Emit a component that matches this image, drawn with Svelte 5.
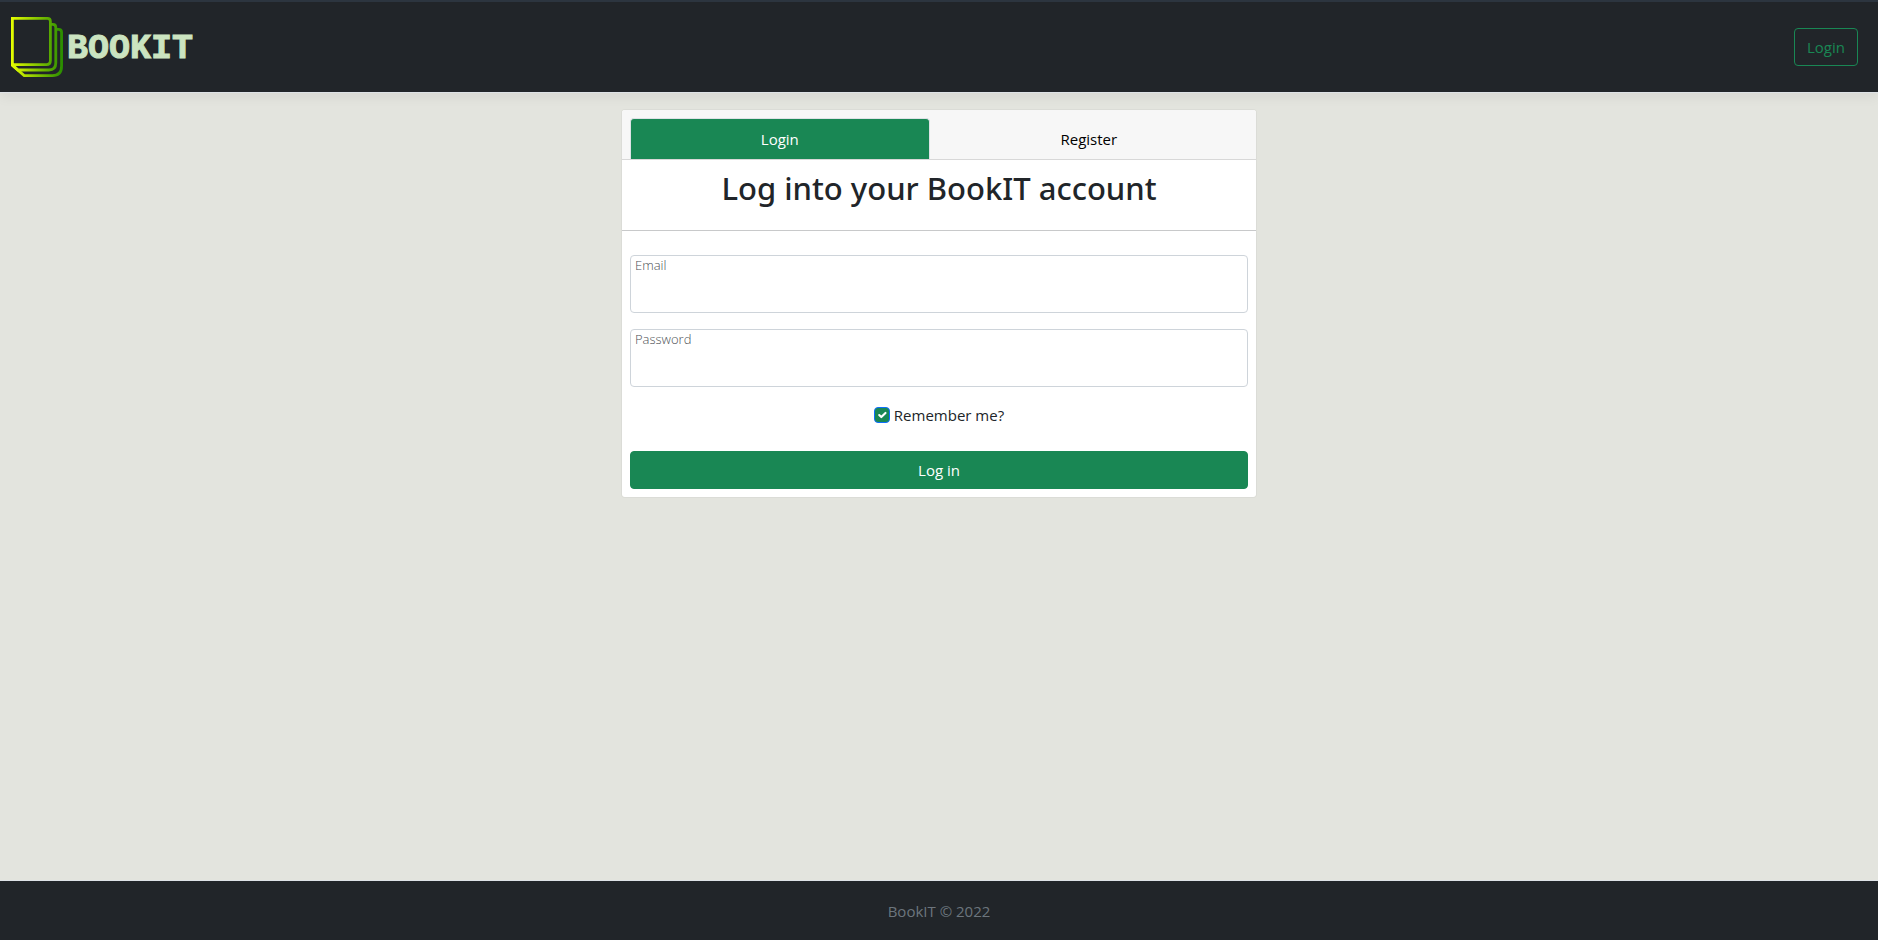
<script>
  let tab = $state('login');
  let remember = $state(true);
  let email = $state('');
  let password = $state('');
</script>

<div class="page">
  <header class="navbar">
    <a class="brand" href="#home" aria-label="BookIT">
      <svg width="52" height="60" viewBox="0 0 52 60" fill="none" stroke="url(#leaf)" stroke-width="2.8" aria-hidden="true">
        <defs>
          <linearGradient id="leaf" gradientUnits="userSpaceOnUse" x1="0" y1="0" x2="52" y2="0">
            <stop offset="0" stop-color="#e6ff00" />
            <stop offset="1" stop-color="#278b00" />
          </linearGradient>
        </defs>
        <path d="M1.4 1.4H36.5Q39.4 1.4 39.4 4.4V43.5Q39.4 47.6 35.4 47.6H1.4Z" />
        <path d="M39.4 7.4H41.8Q44.8 7.4 44.8 10.4V46Q44.8 53 37.8 53H7L1.4 48" />
        <path d="M44.8 12.4H47.6Q50.6 12.4 50.6 15.4V49Q50.6 58.6 41.4 58.6H13.2L1.4 48.4V46" />
      </svg>
      <span class="wordmark">BOOKIT</span>
    </a>
    <a class="btn outline" href="#login">Login</a>
  </header>

  <main>
    <section class="card">
      <nav class="tabs">
        <button type="button" class:active={tab === 'login'} onclick={() => (tab = 'login')}>Login</button>
        <button type="button" class:active={tab === 'register'} onclick={() => (tab = 'register')}>Register</button>
      </nav>
      <h2>Log into your BookIT account</h2>
      <form onsubmit={(e) => e.preventDefault()}>
        <div class="field">
          <label for="email">Email</label>
          <input id="email" type="email" bind:value={email} />
        </div>
        <div class="field">
          <label for="password">Password</label>
          <input id="password" type="password" bind:value={password} />
        </div>
        <div class="remember">
          <input id="remember" type="checkbox" bind:checked={remember} />
          <label for="remember">Remember me?</label>
        </div>
        <button class="btn solid" type="submit">Log in</button>
      </form>
    </section>
  </main>

  <footer>BookIT © 2022</footer>
</div>

<style>
  :global(body) {
    margin: 0;
    background: #e3e4de;
  }
  .page, .page * {
    box-sizing: border-box;
  }
  .page {
    min-height: 100vh;
    display: flex;
    flex-direction: column;
    font-family: "Open Sans", "Noto Sans", sans-serif;
    font-size: 15px;
    line-height: 24px;
    color: #212529;
  }
  button, input {
    font: inherit;
  }
  .navbar {
    display: flex;
    align-items: center;
    justify-content: space-between;
    padding: 15px 20px 15px 11px;
    background: #212529;
    border-top: 2px solid #2c353f;
    border-bottom: 1px solid #dee2e6;
    box-shadow: 0 4px 12px rgba(0, 0, 0, 0.06);
  }
  .brand {
    display: flex;
    align-items: center;
    gap: 4px;
    text-decoration: none;
  }
  .brand svg {
    display: block;
  }
  .wordmark {
    padding-top: 4px;
    font: bold 35px/40px "Liberation Mono", monospace;
    color: #cbe4c0;
    -webkit-text-stroke: 1px #cbe4c0;
  }
  .btn {
    height: 38px;
    padding: 6px 12px;
    border: 1px solid #198754;
    border-radius: 4px;
    text-align: center;
    text-decoration: none;
    cursor: pointer;
  }
  .outline {
    color: #198754;
  }
  .solid {
    width: 100%;
    background: #198754;
    color: #fff;
  }
  main {
    flex: 1;
    padding: 16px 12px;
  }
  .card {
    max-width: 636px;
    margin: 0 auto;
    background: #fff;
    background-clip: padding-box;
    border: 1px solid rgba(0, 0, 0, 0.03);
    border-radius: 4px;
  }
  .tabs {
    display: flex;
    padding: 8px 8px 0;
    background: #f7f7f7;
    border-bottom: 1px solid #d8d8d8;
    border-radius: 3px 3px 0 0;
  }
  .tabs button {
    flex: 1 1 auto;
    padding: 8px 16px;
    border: 1px solid transparent;
    border-bottom: 0;
    border-radius: 4px 4px 0 0;
    background: none;
    color: #000;
    cursor: pointer;
  }
  .tabs .active {
    background: #198754;
    border-color: #dee2e6;
    color: #fff;
  }
  h2 {
    margin: 0;
    padding: 9px 8px 23px;
    border-bottom: 1px solid #c8c9ca;
    font-family: "Noto Sans", "Open Sans", sans-serif;
    font-size: 31px;
    line-height: 38px;
    font-weight: 500;
    text-align: center;
  }
  form {
    padding: 24px 8px 8px;
  }
  .field {
    position: relative;
    margin-bottom: 16px;
  }
  .field label {
    position: absolute;
    top: 0;
    left: 5px;
    font-size: 13px;
    line-height: 20px;
    font-weight: 300;
    color: #4c5054;
  }
  .field input {
    display: block;
    width: 100%;
    height: 58px;
    padding: 24px 12px 8px;
    border: 1px solid #ced4da;
    border-radius: 4px;
    background: #fff;
  }
  .remember {
    display: flex;
    justify-content: center;
    align-items: center;
    gap: 4px;
    margin-bottom: 24px;
  }
  .remember input {
    appearance: none;
    width: 16px;
    height: 16px;
    margin: 0;
    border: 1px solid #adb5bd;
    border-radius: 4px;
  }
  .remember input:checked {
    border-color: #0d6efd;
    background: #198754 url("data:image/svg+xml,%3Csvg xmlns='http://www.w3.org/2000/svg' viewBox='0 0 20 20'%3E%3Cpath fill='none' stroke='%23fff' stroke-linecap='round' stroke-linejoin='round' stroke-width='3' d='M6 10l3 3l6-6'/%3E%3C/svg%3E") center / contain;
  }
  footer {
    padding: 18px 12px 17px;
    background: #212529;
    border-top: 1px solid #dee2e6;
    color: #6c757d;
    text-align: center;
  }
</style>
